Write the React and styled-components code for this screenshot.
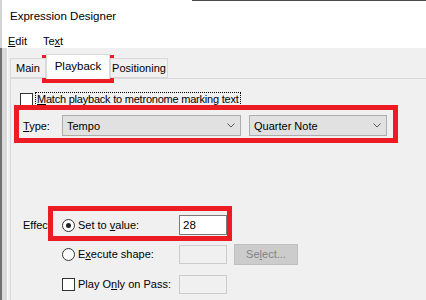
import React from "react"
import styled, { createGlobalStyle } from "styled-components"

const GlobalStyle = createGlobalStyle`
  html, body {
    margin: 0;
    padding: 0;
  }
  body {
    width: 426px;
    height: 300px;
    overflow: hidden;
    background: #f0f0f0;
    font-family: "Liberation Sans", Arial, sans-serif;
    font-size: 11px;
    color: #000;
  }
`

const Screen = styled.div`
  position: relative;
  display: flex;
  width: 426px;
  height: 300px;
  overflow: hidden;
`

const Edge = styled.div`
  flex: none;
  width: 2px;
  background: linear-gradient(to bottom, #d4d4d4 0 48px, #707070 48px);
`

const Dialog = styled.div`
  flex: 1;
  display: flex;
  flex-direction: column;
`

const Header = styled.div`
  height: 48px;
  background: #fff;
  position: relative;
`

const TopLine = styled.div`
  position: absolute;
  top: 0;
  left: 190px;
  right: 0;
  height: 1px;
  background: #4a4a4a;
`

const Title = styled.div`
  height: 32px;
  padding-left: 8px;
  display: flex;
  align-items: center;
  font-size: 11.5px;
`

const MenuBar = styled.div`
  display: flex;
  gap: 16px;
  padding: 2px 0 0 6px;
  height: 14px;
  align-items: center;
`

const U = styled.span`
  text-decoration: underline;
  text-underline-offset: 1px;
`

const Body = styled.div`
  flex: 1;
  display: flex;
`

const Side = styled.div`
  flex: none;
  width: 5px;
  background: #dadada;
  border-right: 1px solid #fafafa;
`

const Client = styled.div`
  flex: 1;
  display: flex;
  flex-direction: column;
  background: #f0f0f0;
`

const TabStrip = styled.div`
  height: 30px;
  display: flex;
  align-items: flex-end;
  padding-left: 2px;
  position: relative;
  z-index: 1;
`

const Tab = styled.div`
  box-sizing: border-box;
  width: ${p => p.$w}px;
  height: ${p => (p.$active ? 25 : 20)}px;
  margin-bottom: ${p => (p.$active ? -1 : 0)}px;
  display: flex;
  align-items: center;
  justify-content: center;
  padding-bottom: ${p => (p.$active ? 3 : 0)}px;
  background: ${p => (p.$active ? "#fff" : "#f0f0f0")};
  border: 1px solid #d9d9d9;
  border-bottom: ${p => (p.$active ? "none" : "1px solid #d9d9d9")};
  font-size: ${p => (p.$active ? 11.5 : 11)}px;
`

const Panel = styled.div`
  flex: 1;
  margin-left: 2px;
  border-top: 1px solid #d9d9d9;
  border-left: 1px solid #d9d9d9;
  padding: 13px 0 0 9px;
  display: flex;
  flex-direction: column;
`

const CheckRow = styled.div`
  display: flex;
  align-items: center;
  height: 14px;
  gap: 2px;
`

const Box = styled.span`
  box-sizing: border-box;
  flex: none;
  width: 13px;
  height: 13px;
  background: #fff;
  border: 1px solid #333;
`

const FocusLabel = styled.span`
  border: 1px dotted #000;
  padding: 0 1px;
  line-height: 12px;
  letter-spacing: -0.22px;
`

const TypeRow = styled.div`
  display: flex;
  align-items: center;
  margin: 9px 0 0 3px;
  height: 21px;
`

const FieldLabel = styled.span`
  flex: none;
  width: 39px;
`

const Select = styled.div`
  box-sizing: border-box;
  width: ${p => p.$w}px;
  height: 21px;
  margin-left: ${p => p.$gap || 0}px;
  display: flex;
  align-items: center;
  justify-content: space-between;
  padding: 0 5px 0 4px;
  background: #e1e1e1;
  border: 1px solid #adadad;
`

const Chevron = () => (
  <svg width="8" height="5" viewBox="0 0 8 5">
    <polyline points="0.5,0.5 4,4 7.5,0.5" fill="none" stroke="#5a5a5a" strokeWidth="1" />
  </svg>
)

const OptionRow = styled.div`
  display: flex;
  align-items: center;
  height: 20px;
  margin: ${p => p.$top}px 0 0 3px;
`

const Radio = styled.span`
  box-sizing: border-box;
  flex: none;
  width: 13px;
  height: 13px;
  border-radius: 50%;
  background: #fff;
  border: 1px solid #333;
  display: flex;
  align-items: center;
  justify-content: center;
  &::after {
    content: "";
    width: 5px;
    height: 5px;
    border-radius: 50%;
    background: ${p => (p.$on ? "#222" : "transparent")};
  }
`

const OptionLabel = styled.span`
  flex: none;
  width: 101px;
  margin-left: 3px;
`

const TextField = styled.div`
  box-sizing: border-box;
  width: 48px;
  height: ${p => (p.$disabled ? 19 : 20)}px;
  padding-left: 3px;
  display: flex;
  align-items: center;
  background: ${p => (p.$disabled ? "#f0f0f0" : "#fff")};
  border: 1px solid ${p => (p.$disabled ? "#cccccc" : "#7a7a7a")};
  font-size: 11.5px;
`

const Button = styled.div`
  box-sizing: border-box;
  width: 64px;
  height: 21px;
  margin-left: 7px;
  display: flex;
  align-items: center;
  justify-content: center;
  background: #cccccc;
  border: 1px solid #bfbfbf;
  color: #838383;
`

const Mark = styled.div`
  position: absolute;
  box-sizing: border-box;
  left: ${p => p.$x}px;
  top: ${p => p.$y}px;
  width: ${p => p.$w}px;
  height: ${p => p.$h}px;
  border: 5px solid #ed1c24;
  pointer-events: none;
`

export default function App() {
  return (
    <Screen>
      <GlobalStyle />
      <Edge />
      <Dialog>
        <Header>
          <TopLine />
          <Title>Expression Designer</Title>
          <MenuBar>
            <span><U>E</U>dit</span>
            <span>Te<U>x</U>t</span>
          </MenuBar>
        </Header>
        <Body>
          <Side />
          <Client>
            <TabStrip>
              <Tab $w={36}>Main</Tab>
              <Tab $w={64} $active>Playback</Tab>
              <Tab $w={58}>Positioning</Tab>
            </TabStrip>
            <Panel>
              <CheckRow>
                <Box />
                <FocusLabel><U>M</U>atch playback to metronome marking text</FocusLabel>
              </CheckRow>
              <TypeRow>
                <FieldLabel><U>T</U>ype:</FieldLabel>
                <Select $w={179}>Tempo<Chevron /></Select>
                <Select $w={138} $gap={8}>Quarter Note<Chevron /></Select>
              </TypeRow>
              <OptionRow $top={79}>
                <FieldLabel>Effect</FieldLabel>
                <Radio $on />
                <OptionLabel>Set to <U>v</U>alue:</OptionLabel>
                <TextField>28</TextField>
              </OptionRow>
              <OptionRow $top={9}>
                <FieldLabel />
                <Radio />
                <OptionLabel>E<U>x</U>ecute shape:</OptionLabel>
                <TextField $disabled />
                <Button>Se<U>l</U>ect...</Button>
              </OptionRow>
              <OptionRow $top={10}>
                <FieldLabel />
                <Box />
                <OptionLabel>Play O<U>n</U>ly on Pass:</OptionLabel>
                <TextField $disabled />
              </OptionRow>
            </Panel>
          </Client>
        </Body>
      </Dialog>
      <Mark $x={42} $y={55} $w={72} $h={28} />
      <Mark $x={14} $y={105} $w={384} $h={38} />
      <Mark $x={48} $y={206} $w={184} $h={35} />
    </Screen>
  )
}
